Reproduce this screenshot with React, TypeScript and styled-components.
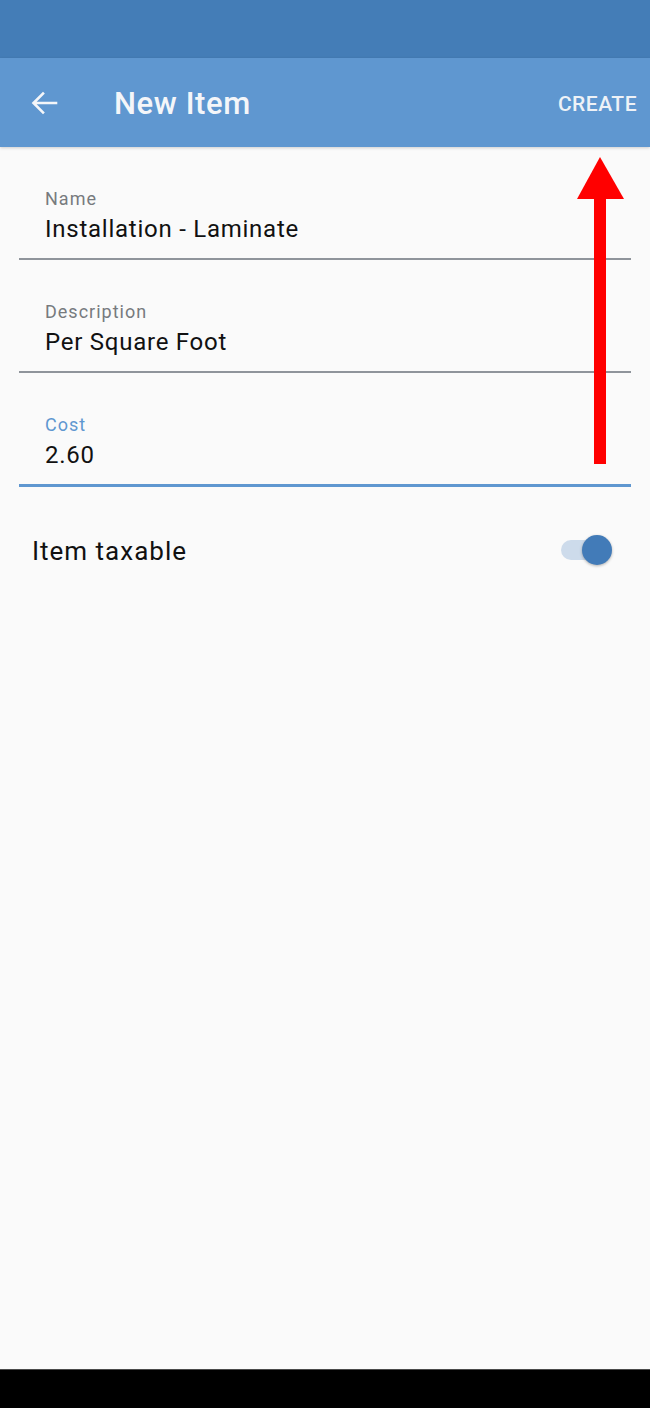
import React, { useState } from 'react'
import styled, { createGlobalStyle } from 'styled-components'

const GlobalStyle = createGlobalStyle`
  html, body {
    margin: 0;
    padding: 0;
    background: #fafafa;
  }
  body {
    font-family: Roboto, 'Noto Sans', 'Liberation Sans', sans-serif;
    -webkit-font-smoothing: antialiased;
  }
`

const BLUE = '#5f97d0'
const DARK_BLUE = '#447db7'

const Screen = styled.div`
  position: relative;
  width: 650px;
  height: 1408px;
  display: flex;
  flex-direction: column;
  background: #fafafa;
  overflow: hidden;
`

const StatusBar = styled.div`
  height: 58px;
  flex: none;
  background: ${DARK_BLUE};
`

const AppBar = styled.header`
  height: 89px;
  flex: none;
  display: flex;
  align-items: center;
  background: ${BLUE};
  box-shadow: 0 1px 3px rgba(0, 0, 0, 0.18);
  position: relative;
  z-index: 1;
`

const BackButton = styled.button`
  width: 58px;
  height: 58px;
  margin-left: 15px;
  padding: 0;
  border: none;
  background: transparent;
  display: flex;
  align-items: center;
  justify-content: center;
  cursor: pointer;
`

const Title = styled.h1`
  flex: 1;
  margin: 2px 0 0 41px;
  font-size: 31px;
  font-weight: 500;
  color: #f4f6f9;
  letter-spacing: 0.6px;
`

const ActionButton = styled.button`
  margin: 2px 13px 0 0;
  padding: 0;
  border: none;
  background: transparent;
  font-family: inherit;
  font-size: 21px;
  font-weight: 500;
  color: #eef2f7;
  letter-spacing: 0.5px;
  cursor: pointer;
`

const Content = styled.main`
  flex: 1;
  display: flex;
  flex-direction: column;
  padding: 0 19px;
`

const Field = styled.label`
  display: flex;
  flex-direction: column;
  padding-top: 41px;
`

const FieldLabel = styled.span<{ $focused?: boolean }>`
  padding-left: 26px;
  font-size: 18px;
  line-height: 22px;
  letter-spacing: 1px;
  color: ${({ $focused }) => ($focused ? BLUE : '#777a7e')};
`

const FieldValue = styled.input`
  margin-top: 4px;
  padding: 0 0 0 26px;
  height: 30px;
  border: none;
  outline: none;
  background: transparent;
  font-family: inherit;
  font-size: 24px;
  letter-spacing: 0.75px;
  color: #111;
`

const Underline = styled.div<{ $focused?: boolean }>`
  margin-top: 14px;
  height: ${({ $focused }) => ($focused ? 3 : 2)}px;
  background: ${({ $focused }) => ($focused ? BLUE : '#8f949b')};
`

const ToggleRow = styled.div`
  margin-top: 32px;
  height: 64px;
  display: flex;
  align-items: center;
  justify-content: space-between;
  padding: 0 18px 0 13px;
`

const ToggleLabel = styled.span`
  font-size: 26px;
  letter-spacing: 1px;
  color: #111;
`

const Switch = styled.button<{ $on: boolean }>`
  position: relative;
  width: 52px;
  height: 34px;
  padding: 0;
  border: none;
  background: transparent;
  cursor: pointer;
`

const Track = styled.span<{ $on: boolean }>`
  position: absolute;
  left: 0;
  top: 6px;
  width: 47px;
  height: 20px;
  border-radius: 10px;
  background: ${({ $on }) => ($on ? '#cddbeb' : '#c4c4c4')};
`

const Thumb = styled.span<{ $on: boolean }>`
  position: absolute;
  top: 1px;
  left: ${({ $on }) => ($on ? 21 : 0)}px;
  width: 30px;
  height: 30px;
  border-radius: 50%;
  background: ${({ $on }) => ($on ? '#427bb8' : '#f1f1f1')};
  box-shadow: 0 1px 3px rgba(0, 0, 0, 0.3);
`

const Annotation = styled.svg`
  position: absolute;
  left: 570px;
  top: 150px;
  pointer-events: none;
`

const NavBar = styled.div`
  height: 38px;
  flex: none;
  background: #000;
  border-top: 1px solid #4a4a4a;
`

export default function App() {
  const [taxable, setTaxable] = useState(true)

  return (
    <Screen>
      <GlobalStyle />
      <StatusBar />
      <AppBar>
        <BackButton aria-label="Back">
          <svg width="28" height="26" viewBox="0 0 28 26" fill="none">
            <path d="M26 13H4M13 3.5L3.5 13l9.5 9.5" stroke="#f4f6f9" strokeWidth="2.6" strokeLinecap="square" />
          </svg>
        </BackButton>
        <Title>New Item</Title>
        <ActionButton>CREATE</ActionButton>
      </AppBar>

      <Content>
        <Field>
          <FieldLabel>Name</FieldLabel>
          <FieldValue defaultValue="Installation - Laminate" />
          <Underline />
        </Field>
        <Field>
          <FieldLabel>Description</FieldLabel>
          <FieldValue defaultValue="Per Square Foot" />
          <Underline />
        </Field>
        <Field>
          <FieldLabel $focused>Cost</FieldLabel>
          <FieldValue defaultValue="2.60" />
          <Underline $focused />
        </Field>

        <ToggleRow>
          <ToggleLabel>Item taxable</ToggleLabel>
          <Switch $on={taxable} onClick={() => setTaxable(!taxable)} aria-label="Item taxable">
            <Track $on={taxable} />
            <Thumb $on={taxable} />
          </Switch>
        </ToggleRow>
      </Content>

      <NavBar />

      {/* red arrow pointing at CREATE */}
      <Annotation width="60" height="320" viewBox="0 0 60 320">
        <polygon points="30,7 7,49 54,49" fill="#ff0000" />
        <rect x="24" y="48" width="12" height="266" fill="#ff0000" />
      </Annotation>
    </Screen>
  )
}
